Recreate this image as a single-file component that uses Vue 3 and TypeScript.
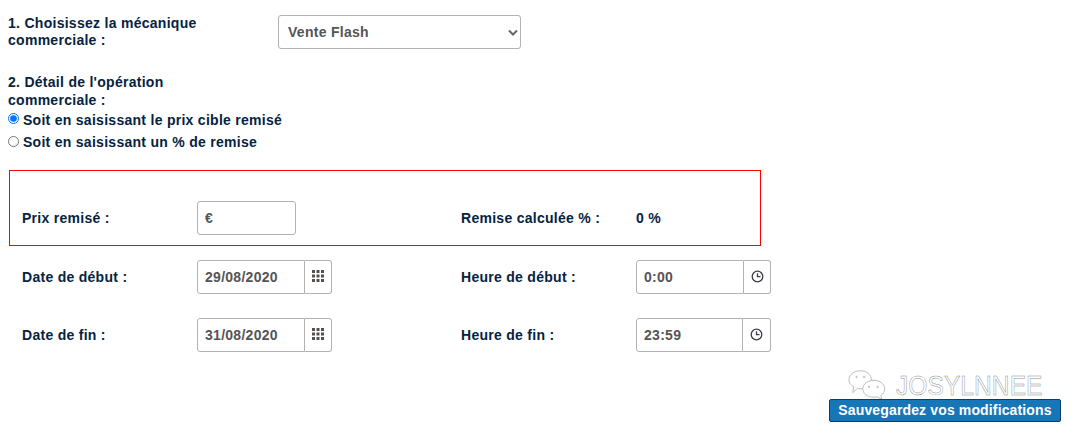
<script setup lang="ts">
interface Field {
  label: string
  value: string
  icon: 'grid' | 'clock'
}

const rows: Field[][] = [
  [
    { label: 'Date de début :', value: '29/08/2020', icon: 'grid' },
    { label: 'Heure de début :', value: '0:00', icon: 'clock' },
  ],
  [
    { label: 'Date de fin :', value: '31/08/2020', icon: 'grid' },
    { label: 'Heure de fin :', value: '23:59', icon: 'clock' },
  ],
]
const dots = [0, 1, 2]
</script>

<template>
  <div class="page">
    <div class="mechanic">
      <label class="title">1. Choisissez la mécanique commerciale :</label>
      <div class="select-wrap">
        <select class="select">
          <option>Vente Flash</option>
        </select>
        <svg class="chevron" width="10" height="7" viewBox="0 0 10 7" fill="none" stroke="#666" stroke-width="2">
          <path d="M1 1.500l4 4 4-4" />
        </svg>
      </div>
    </div>

    <div class="title detail">2. Détail de l'opération commerciale :</div>
    <label class="choice first"><input type="radio" name="mode" checked />Soit en saisissant le prix cible remisé</label>
    <label class="choice second"><input type="radio" name="mode" />Soit en saisissant un % de remise</label>

    <div class="box">
      <div class="row">
        <span>Prix remisé :</span>
        <input class="control price" value="€" />
        <span>Remise calculée % :</span>
        <span>0 %</span>
      </div>
    </div>

    <div class="dates">
      <div v-for="(row, i) in rows" :key="i" class="row">
        <template v-for="field in row" :key="field.label">
          <span>{{ field.label }}</span>
          <div class="group">
            <input class="control" :value="field.value" />
            <span class="addon">
              <svg v-if="field.icon === 'grid'" width="12" height="12" viewBox="0 0 12 12">
                <template v-for="y in dots" :key="y">
                  <rect v-for="x in dots" :key="x" :x="x * 4.5" :y="y * 4.5" width="3" height="3" fill="#594f4f" />
                </template>
              </svg>
              <svg v-else width="13" height="13" viewBox="0 0 13 13" fill="none" stroke="#3d3a4a" stroke-width="1.300">
                <circle cx="6.500" cy="6.500" r="5.300" />
                <path d="M6.500 3.200v3.500h3" />
              </svg>
            </span>
          </div>
        </template>
      </div>
    </div>

    <div class="footer">
      <button class="save">Sauvegardez vos modifications</button>
    </div>

    <div class="watermark">
      <svg width="40" height="33" viewBox="0 0 42 33" fill="#fff" stroke="#b8b8b8" stroke-width="1">
        <path d="M13 1c6.500 0 11.500 4 11.500 9.500 0 5.500-5 9.500-11 9.500-1.500 0-2.500-.2-3.500-.5L5 24l1-6.200C3 16 1 13.500 1 10.500 1 5 6.500 1 13 1z" />
        <path d="M27 11c6.500 0 11.500 4 11.500 9 0 3-1.500 5.300-4 7l1 4-5-2.600c-1 .3-2.300.5-3.500.5-6.500 0-11.500-4-11.500-9s5.500-8.900 12-8.900z" />
        <circle cx="9" cy="7.500" r=".8" />
        <circle cx="17" cy="7.500" r=".8" />
        <circle cx="22" cy="18" r=".8" />
        <circle cx="31" cy="18" r=".8" />
      </svg>
      <span class="mark-text">JOSYLNNEE</span>
    </div>
  </div>
</template>

<style scoped>
.page {
  position: relative;
  width: 1080px;
  height: 434px;
  overflow: hidden;
  padding: 15px 0 0 8px;
  box-sizing: border-box;
  background: #fff;
  font-family: "Liberation Sans", Arial, sans-serif;
  font-size: 14px;
  font-weight: 700;
  letter-spacing: 0.28px;
  color: #06233f;
}

.mechanic {
  display: flex;
  align-items: flex-start;
}

.title {
  display: block;
  width: 200px;
  line-height: 17px;
}

.mechanic .title {
  width: 270px;
  padding-right: 60px;
  box-sizing: border-box;
}

.select-wrap {
  position: relative;
}

.select {
  display: block;
  width: 243px;
  height: 34px;
  padding: 0 9px;
  border: 1px solid #b3b3b3;
  border-radius: 3px;
  background: #fff;
  font: inherit;
  letter-spacing: inherit;
  color: #555;
  appearance: none;
}

.chevron {
  position: absolute;
  right: 3px;
  top: 14px;
  pointer-events: none;
}

.detail {
  margin-top: 24px;
  line-height: 18px;
}

.choice {
  display: flex;
  align-items: center;
  height: 17px;
  margin-top: 5px;
}

.choice.first {
  margin-top: 2px;
}

.choice input {
  width: 11px;
  height: 11px;
  margin: 0 4px 2px 0;
}

.choice.second input {
  margin-bottom: 0;
}

.box {
  width: 752px;
  height: 76px;
  margin: 20px 0 0 1px;
  border: 1px solid #f00;
  box-sizing: border-box;
  padding: 30px 0 0 12px;
}

.row {
  display: grid;
  grid-template-columns: 175px 264px 175px auto;
  align-items: center;
  height: 34px;
}

.dates {
  padding: 14px 0 0 14px;
}

.dates .row + .row {
  margin-top: 24px;
}

.control {
  width: 108px;
  height: 34px;
  padding: 0 7px;
  box-sizing: border-box;
  border: 1px solid #b3b3b3;
  border-radius: 3px 0 0 3px;
  background: #fff;
  font: inherit;
  letter-spacing: inherit;
  color: #555;
}

.dates .row + .row .group:last-child .control {
  width: 107px;
}

.price {
  width: 99px;
  border-radius: 3px;
}

.group {
  display: flex;
  width: 135px;
}

.addon {
  display: flex;
  flex: 1;
  align-items: center;
  justify-content: center;
  padding-bottom: 2px;
  border: 1px solid #b3b3b3;
  border-left: 0;
  border-radius: 0 3px 3px 0;
}

.footer {
  position: relative;
  z-index: 1;
  display: flex;
  justify-content: flex-end;
  margin-top: 47px;
  padding-right: 19px;
}

.save {
  width: 232px;
  height: 23px;
  padding: 0 0 1px;
  border: 1px solid #0d3c68;
  border-radius: 2px;
  background: #1776b8;
  color: #fff;
  font: inherit;
  letter-spacing: 0.14px;
}

.watermark {
  position: absolute;
  left: 848px;
  top: 369px;
  display: flex;
  align-items: center;
  gap: 8px;
}

.mark-text {
  display: block;
  font-size: 28px;
  font-weight: 400;
  letter-spacing: 0;
  color: #fff;
  -webkit-text-stroke: 0.5px #8f8f8f;
  transform: scaleX(0.88);
  transform-origin: left center;
}
</style>
